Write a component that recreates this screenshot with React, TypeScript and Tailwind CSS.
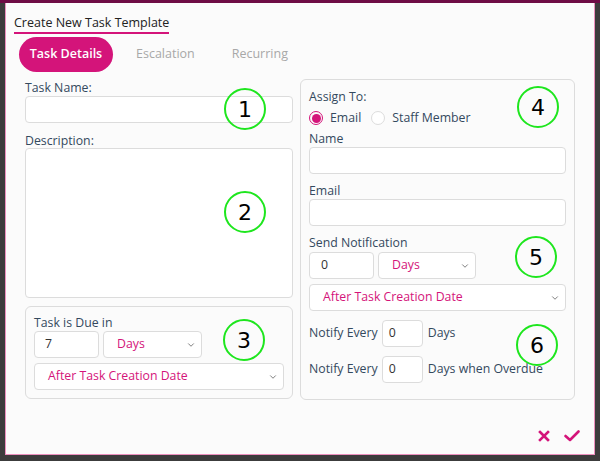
import { ChevronDown } from "lucide-react";

const PINK = "text-[#d4147a]";

function Circle({ n, className }: { n: string; className: string }) {
  return (
    <div
      className={`absolute w-[42px] h-[42px] rounded-full border-[2.5px] border-[#1ee61e] flex items-center justify-center text-[22px] text-black font-['DejaVu_Sans',sans-serif] ${className}`}
    >
      {n}
    </div>
  );
}

function Input({ value, className = "" }: { value?: string; className?: string }) {
  return (
    <div className={`h-[27px] rounded-[4px] border border-[#dcdcdc] bg-white flex items-center text-[12.3px] text-[#333] ${className}`}>
      {value}
    </div>
  );
}

function Select({ value, className = "" }: { value: string; className?: string }) {
  return (
    <div className={`h-[27px] rounded-[4px] border border-[#dcdcdc] bg-white flex items-center justify-between pl-[13px] pr-[5px] text-[12.3px] ${PINK} ${className}`}>
      <span>{value}</span>
      <ChevronDown size={10} className="text-[#666]" strokeWidth={2} />
    </div>
  );
}

function Label({ children, className = "" }: { children: React.ReactNode; className?: string }) {
  return <div className={`text-[12.3px] text-[#34495e] leading-[14px] ${className}`}>{children}</div>;
}

export default function App() {
  return (
    <div className="w-[600px] h-[461px] bg-[#3c3c3c] border-t-[3px] border-[#6e0c45] font-['Open_Sans',sans-serif] overflow-hidden">
      <div className="relative ml-[5px] w-[590px] h-[452px] bg-[#fbfbfb] border border-t-0 border-[#ec8fbd]">
        {/* title */}
        <div className="pl-[8px] pt-[6px]">
          <span className="inline-block text-[12.5px] text-[#222] leading-[16px] pb-[1px] border-b-2 border-[#d4147a]">
            Create New Task Template
          </span>
        </div>

        {/* tabs */}
        <div className="flex items-center mt-[3px] pl-[13px] text-[12.5px]">
          <div className="w-[94px] h-[35px] rounded-full bg-[#d4147a] text-white font-semibold flex items-center justify-center">
            Task Details
          </div>
          <div className="ml-[23px] text-[#a8a8a8]">Escalation</div>
          <div className="ml-[37px] text-[#a8a8a8]">Recurring</div>
        </div>

        {/* body */}
        <div className="flex gap-[7px] pl-[19px] mt-[7px]">
          <div className="w-[268px] pt-[2px]">
            <Label>Task Name:</Label>
            <Input className="mt-[1px]" />
            <Label className="mt-[11px]">Description:</Label>
            <div className="h-[150px] rounded-[4px] border border-[#dcdcdc] bg-white" />
            <div className="mt-[8px] h-[93px] rounded-[6px] border border-[#dcdcdc] px-[8px] pt-[9px]">
              <Label>Task is Due in</Label>
              <div className="flex gap-[4px] mt-[1px]">
                <Input value="7" className="w-[65px] pl-[10px]" />
                <Select value="Days" className="w-[99px]" />
              </div>
              <Select value="After Task Creation Date" className="mt-[5px]" />
            </div>
          </div>

          <div className="w-[275px] h-[321px] rounded-[6px] border border-[#dcdcdc] px-[8px] pt-[10px]">
            <Label>Assign To:</Label>
            <div className="flex items-center h-[14px] mt-[7px] text-[12.3px] text-[#34495e]">
              <span className="w-[14px] h-[14px] rounded-full border border-[#d4147a] flex items-center justify-center">
                <span className="w-[9px] h-[9px] rounded-full bg-[#d4147a]" />
              </span>
              <span className="ml-[7px]">Email</span>
              <span className="ml-[10px] w-[14px] h-[14px] rounded-full border border-[#dcdcdc] bg-white" />
              <span className="ml-[7px]">Staff Member</span>
            </div>
            <Label className="mt-[7px]">Name</Label>
            <Input className="mt-[1px]" />
            <Label className="mt-[10px]">Email</Label>
            <Input className="mt-[1px]" />
            <Label className="mt-[10px]">Send Notification</Label>
            <div className="flex gap-[4px] mt-[2px]">
              <Input value="0" className="w-[65px] pl-[11px]" />
              <Select value="Days" className="w-[98px]" />
            </div>
            <Select value="After Task Creation Date" className="mt-[5px]" />
            <div className="flex items-center mt-[9px] text-[12.3px] text-[#34495e]">
              <span>Notify Every</span>
              <Input value="0" className="ml-[4px] w-[41px] pl-[6px]" />
              <span className="ml-[5px]">Days</span>
            </div>
            <div className="flex items-center mt-[9px] text-[12.3px] text-[#34495e]">
              <span>Notify Every</span>
              <Input value="0" className="ml-[4px] w-[41px] pl-[6px]" />
              <span className="ml-[5px]">Days when Overdue</span>
            </div>
          </div>
        </div>

        {/* footer actions */}
        <div className="absolute right-[14px] bottom-[12px] flex items-center gap-[14px] text-[#d4147a]">
          <svg width="12" height="12" viewBox="0 0 12 12">
            <path d="M2 2 L10 10 M10 2 L2 10" stroke="currentColor" strokeWidth="2.6" strokeLinecap="square" />
          </svg>
          <svg width="16" height="12" viewBox="0 0 16 12">
            <path d="M1.5 6 L6 10 L14.5 1.5" stroke="currentColor" strokeWidth="2.6" fill="none" strokeLinecap="round" strokeLinejoin="round" />
          </svg>
        </div>

        {/* annotation circles */}
        <Circle n="1" className="left-[218px] top-[85px]" />
        <Circle n="2" className="left-[218px] top-[188px]" />
        <Circle n="3" className="left-[217px] top-[316px]" />
        <Circle n="4" className="left-[511px] top-[83px]" />
        <Circle n="5" className="left-[509px] top-[233px]" />
        <Circle n="6" className="left-[510px] top-[321px]" />
      </div>
    </div>
  );
}
